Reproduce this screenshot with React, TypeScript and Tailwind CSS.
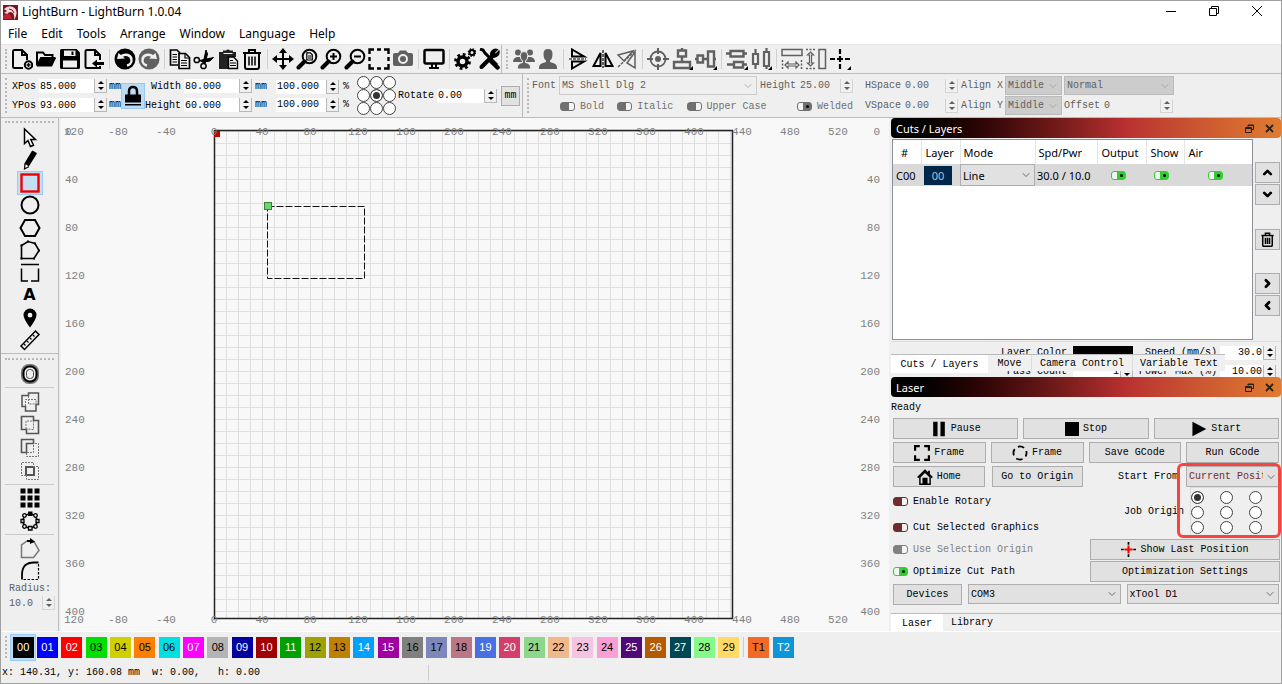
import type { ReactNode } from "react";
import { ChevronDown, ChevronLeft, ChevronRight, ChevronUp } from "lucide-react";

const menus = ["File", "Edit", "Tools", "Arrange", "Window", "Language", "Help"];

const swatches = [
  { id: "00", style: "bg-black text-white" },
  { id: "01", style: "bg-[#0000ff] text-white" },
  { id: "02", style: "bg-[#ff0000] text-white" },
  { id: "03", style: "bg-[#00e000] text-black" },
  { id: "04", style: "bg-[#d0d000] text-black" },
  { id: "05", style: "bg-[#ff8000] text-black" },
  { id: "06", style: "bg-[#00e0e0] text-black" },
  { id: "07", style: "bg-[#ff00ff] text-white" },
  { id: "08", style: "bg-[#b4b4b4] text-black" },
  { id: "09", style: "bg-[#0000a0] text-white" },
  { id: "10", style: "bg-[#a00000] text-white" },
  { id: "11", style: "bg-[#00a000] text-white" },
  { id: "12", style: "bg-[#a0a000] text-black" },
  { id: "13", style: "bg-[#c08000] text-black" },
  { id: "14", style: "bg-[#00a0ff] text-white" },
  { id: "15", style: "bg-[#a000a0] text-white" },
  { id: "16", style: "bg-[#808080] text-black" },
  { id: "17", style: "bg-[#7d87b9] text-black" },
  { id: "18", style: "bg-[#bb7784] text-black" },
  { id: "19", style: "bg-[#4a6fe3] text-white" },
  { id: "20", style: "bg-[#d33f6a] text-white" },
  { id: "21", style: "bg-[#8cd78c] text-black" },
  { id: "22", style: "bg-[#f0b98d] text-black" },
  { id: "23", style: "bg-[#f6c4e1] text-black" },
  { id: "24", style: "bg-[#fa9ed4] text-black" },
  { id: "25", style: "bg-[#500a78] text-white" },
  { id: "26", style: "bg-[#b45a00] text-white" },
  { id: "27", style: "bg-[#004754] text-white" },
  { id: "28", style: "bg-[#86fa88] text-black" },
  { id: "29", style: "bg-[#ffdb66] text-black" },
];

const toolSwatches = [
  { id: "T1", style: "bg-[#f36926] text-black" },
  { id: "T2", style: "bg-[#0c96d9] text-white" },
];

/* ---------- icons, all on a 22 x 22 grid ---------- */

function Glyph({ children, size = "size-[22px]" }: { children: ReactNode; size?: string }) {
  return (
    <svg viewBox="0 0 22 22" className={`${size} shrink-0`} fill="none" stroke="currentColor" strokeWidth="2" aria-hidden="true">
      {children}
    </svg>
  );
}

const NewIcon = (
  <Glyph>
    <path d="M12 20H3.500Q2 20 2 18.500V3.500Q2 2 3.500 2H11l5 5v5M11 2v5h5" />
    <circle cx="17.500" cy="17" r="3.700" />
    <path d="M17.500 15v4M15.500 17h4" strokeWidth="1.500" />
  </Glyph>
);
const OpenIcon = (
  <Glyph>
    <path d="M2 17V4.500H8l2 2.500h7.500v3" />
    <path d="M2 18.500 6 10h15l-4 8.500z" fill="currentColor" stroke="none" />
    <path d="M2 18 6 10h14.500" />
  </Glyph>
);
const SaveIcon = (
  <Glyph>
    <path d="M1 2.500Q1 1 2.500 1h15L21 4.500v15q0 1.500-1.500 1.500h-17Q1 21 1 19.500z" fill="currentColor" stroke="none" />
    <path d="M5 2.500h11.500V8H5z" fill="#efefef" stroke="none" />
    <path d="M4 12.500h14v7H4z" fill="#efefef" stroke="none" />
    <path d="M13.500 3.500v3.500" />
  </Glyph>
);
const ExportIcon = (
  <Glyph>
    <path d="M17 12V7l-5-5H4Q2.500 2 2.500 3.500v15Q2.500 20 4 20h13v-2M12 2v5h5" />
    <path d="M9 15.500 14 11.500V14h7v3h-7v2.500z" fill="currentColor" stroke="none" />
  </Glyph>
);
const UndoIcon = (
  <Glyph>
    <circle cx="11" cy="11" r="10.500" fill="currentColor" stroke="none" />
    <path d="M7 8.500C11 5 17 7 17.500 11.500 18 15 15 17 13 17.500" stroke="#efefef" strokeWidth="2.500" />
    <path d="M3 11 4.500 5l6.500 5.500z" fill="#efefef" stroke="none" />
  </Glyph>
);
const RedoIcon = (
  <Glyph>
    <circle cx="11" cy="11" r="10.500" fill="#606060" stroke="none" />
    <path d="M15 8.500C11 5 5 7 4.500 11.500 4 15 7 17 9 17.500" stroke="#efefef" strokeWidth="2.500" />
    <path d="M19 11 17.500 5 11 10.500z" fill="#efefef" stroke="none" />
  </Glyph>
);
const CopyIcon = (
  <Glyph>
    <path d="M9 17H1.500V2H8l3 3" strokeWidth="1.700" />
    <path d="M10 5.500h6.500l4 4V20.500H10z" strokeWidth="1.700" />
    <path d="M16 5.500v4.500h4.500M12 12.500h6M12 15h6M12 17.500h6M3.500 6.500H8M3.500 9H8M3.500 11.500H8M3.500 14H8" strokeWidth="1.200" />
  </Glyph>
);
const CutIcon = (
  <Glyph>
    <circle cx="3.800" cy="12" r="2.600" strokeWidth="1.500" />
    <circle cx="10.500" cy="18" r="2.600" strokeWidth="1.500" />
    <path d="m6.500 12.500 14-3-3.500 3.500-7 1.200zM10 15.500 13 2l1.500 4-2.500 9.500z" fill="currentColor" strokeWidth="1" />
  </Glyph>
);
const PasteIcon = (
  <Glyph>
    <path d="M2 4h4V2.500h3a2.500 2.500 0 0 1 4 0h3V4h3v5h-8v12H2z" fill="#222" stroke="none" />
    <path d="M6.500 5.500h9" stroke="#efefef" strokeWidth="1" />
    <path d="M11.500 9h5l4 4v7.500h-9z" fill="#efefef" strokeWidth="1.400" />
    <path d="M13 12.500h3M13 15h6M13 17.500h6" strokeWidth="1.200" />
  </Glyph>
);
const TrashIcon = (
  <Glyph>
    <path d="M2 5h18M8 4.500V2h6v2.500" />
    <path d="M4 5v14q0 2 2 2h10q2 0 2-2V5" />
    <path d="M8 8.500v9M11 8.500v9M14 8.500v9" strokeWidth="1.500" />
  </Glyph>
);
const MoveIcon = (
  <Glyph>
    <path d="M11 4v14M4 11h14" />
    <path d="m11 0 4 5H7zM11 22l4-5H7zM0 11l5-4v8zM22 11l-5-4v8z" fill="currentColor" stroke="none" />
  </Glyph>
);

function Magnifier({ children }: { children: ReactNode }) {
  return (
    <Glyph>
      <circle cx="13.500" cy="8.500" r="6.800" />
      <path d="m8.500 13.500-6 6" strokeWidth="4" strokeLinecap="round" />
      {children}
    </Glyph>
  );
}
const ZoomPageIcon = (
  <Magnifier>
    <path d="M10.800 4.800h3.500l2 2v5.200h-5.500z" strokeWidth="1.200" />
    <path d="M12 8h3.500M12 10h3.500" strokeWidth="1" />
  </Magnifier>
);
const ZoomInIcon = (
  <Magnifier>
    <path d="M13.500 5v7M10 8.500h7" />
  </Magnifier>
);
const ZoomOutIcon = (
  <Magnifier>
    <path d="M10 8.500h7" />
  </Magnifier>
);
const FrameIcon = (
  <Glyph>
    <path d="M1.500 6V1.500H6M9 1.500h4M16 1.500h4.500V6M20.500 9v4M20.500 16v4.500H16M13 20.500H9M6 20.500H1.500V16M1.500 13V9" strokeWidth="2.400" />
  </Glyph>
);
const CameraIcon = (
  <Glyph>
    <path d="M1 7q0-2 2-2h3l2-2.500h6L16 5h3q2 0 2 2v9q0 2-2 2H3q-2 0-2-2z" fill="#606060" stroke="none" />
    <circle cx="11" cy="11" r="4" stroke="#efefef" />
  </Glyph>
);
const MonitorIcon = (
  <Glyph>
    <rect x="1.500" y="2" width="19" height="13.500" rx="1.500" strokeWidth="2.500" />
    <path d="M9 16v3.500M13 16v3.500M6 20h10" />
  </Glyph>
);
const GearsIcon = (
  <Glyph>
    <circle cx="8.500" cy="13.500" r="4.500" strokeWidth="3.500" />
    <circle cx="8.500" cy="13.500" r="7" strokeWidth="2.800" strokeDasharray="2.750 2.750" />
    <circle cx="18" cy="4.500" r="2.500" />
    <circle cx="18" cy="4.500" r="3.800" strokeWidth="1.200" strokeDasharray="1.500 1.500" />
  </Glyph>
);
const ToolsIcon = (
  <Glyph>
    <path d="m2 1 3 1 2 3 12 12" strokeWidth="3" />
    <path d="m13 13 6.500 6.500" strokeWidth="4.500" strokeLinecap="round" />
    <path d="M3.500 19 15 7.500" strokeWidth="4" strokeLinecap="round" />
    <path d="M19.500 1.500 16 5l1.500 1.500L21 3a5 5 0 0 1-8 5 5 5 0 0 1 6.500-6.500z" fill="currentColor" strokeWidth="1.200" />
  </Glyph>
);
const GroupIcon = (
  <Glyph>
    <g fill="#606060" stroke="none">
      <circle cx="5" cy="4.500" r="3" />
      <circle cx="17" cy="4.500" r="3" />
      <path d="M0 14q0-4 4-5h3l3 5zM22 14q0-4-4-5h-3l-3 5z" />
    </g>
    <path d="M11 3.500q3.800 0 3.800 4T12.500 13v1.500q5 1 5 5v1.500h-13v-1.500q0-4 5-5V13Q7.200 11.500 7.200 7.500T11 3.500z" fill="#606060" stroke="#efefef" strokeWidth="1" />
  </Glyph>
);
const UserIcon = (
  <Glyph>
    <path d="M11 1q4.500 0 4.500 5T13 12.500V14q7 1.500 7 5v2H2v-2q0-3.500 7-5v-1.500Q6.500 11 6.500 6T11 1z" fill="#606060" stroke="none" />
  </Glyph>
);
const FlipVIcon = (
  <Glyph>
    <path d="M4 1.500v7h12zM4 20.500v-7h12z" />
    <path d="M1 11h17" strokeWidth="1.200" strokeDasharray="3 1" />
  </Glyph>
);
const FlipHIcon = (
  <Glyph>
    <path d="M8.500 5v13h-7zM13.500 5v13h7z" />
    <path d="M11 2v18" strokeWidth="1.200" strokeDasharray="3 1" />
  </Glyph>
);
const MirrorIcon = (
  <Glyph>
    <g stroke="#606060" strokeWidth="1.500">
      <path d="M2 7 17 3 8 13zM11 15l8-11v16z" />
      <path d="M2 19 20 2" strokeDasharray="3 1" />
    </g>
  </Glyph>
);
const TargetIcon = (
  <Glyph>
    <g stroke="#606060">
      <circle cx="11" cy="11" r="7.500" strokeWidth="1.800" />
      <circle cx="11" cy="11" r="3" fill="#606060" stroke="none" />
      <path d="M11 0v6M11 16v6M0 11h6M16 11h6" />
    </g>
  </Glyph>
);
const AlignCenterVIcon = (
  <Glyph>
    <g stroke="#606060" strokeWidth="2.400">
      <path d="M7 2.500h8v6H7zM3 14h16v6H3zM11 0v2M11 8v6" />
    </g>
    <path d="m22 18v4h-4z" fill="currentColor" stroke="none" />
  </Glyph>
);
const AlignCenterHIcon = (
  <Glyph>
    <g stroke="#606060" strokeWidth="2.400">
      <path d="M2.500 7.500h5.500v7H2.500zM13 3.500h6v15h-6zM0 11h2M8 11h5M19 11h2" />
    </g>
    <path d="m22 18v4h-4z" fill="currentColor" stroke="none" />
  </Glyph>
);
const DistributeVIcon = (
  <Glyph>
    <g stroke="#606060" strokeWidth="2.400">
      <path d="M4.500 3h13v5.500h-13zM8 14h9v5.500H8zM0 5.500h4M18 5.500h3M1 16.500h7M17 16.500h4" />
    </g>
    <path d="m22 18v4h-4z" fill="currentColor" stroke="none" />
  </Glyph>
);
const DistributeHIcon = (
  <Glyph>
    <g stroke="#606060" strokeWidth="2.200">
      <path d="M3 6h5v10H3zM14 4h5v14h-5zM5.500 1v5M5.500 16v5M16.500 0v4M16.500 18v3" />
    </g>
    <path d="m22 18v4h-4z" fill="currentColor" stroke="none" />
  </Glyph>
);
const DockHIcon = (
  <Glyph>
    <g stroke="#606060" strokeWidth="1.500">
      <path d="M1 1.500h20v6H1z" />
      <path d="M1.500 12v9M20.500 12v9" strokeDasharray="2 1.500" />
      <path d="m4 17 3-3v2h8v-2l3 3-3 3v-2H7v2z" strokeWidth="1.200" />
    </g>
  </Glyph>
);
const DockVIcon = (
  <Glyph>
    <g stroke="#606060" strokeWidth="1.500">
      <path d="M14 1.500h6.500v19H14z" />
      <path d="M1 1.500h9M1 20.500h9" strokeDasharray="2 1.500" />
      <path d="m5.500 4 3 3h-2v8h2l-3 3-3-3h2V7h-2z" strokeWidth="1.200" />
    </g>
  </Glyph>
);
const CrossIcon = (
  <Glyph>
    <path d="M11 1v5M11 8v6M11 16v5M1 11h5M8 11h6M16 11h5" strokeWidth="2.200" />
    <path d="m22 18v4h-4z" fill="currentColor" stroke="none" />
  </Glyph>
);

const PointerIcon = (
  <Glyph>
    <path d="M5.500 2v14.500l3.500-3 2.500 6 3-1.200-2.700-5.800H16.500z" fill="#fff" strokeWidth="1.500" />
  </Glyph>
);
const PencilIcon = (
  <Glyph>
    <path d="m13.500 2.500 3.500 2-7.500 12L6 15z" fill="currentColor" strokeWidth="1.500" strokeLinejoin="round" />
    <path d="m6 15-.5 5 4.500-2.500" fill="#fff" strokeWidth="1.200" />
  </Glyph>
);
const RectIcon = (
  <Glyph>
    <rect x="2.500" y="2.500" width="17" height="17" stroke="#f00000" strokeWidth="2.400" />
  </Glyph>
);
const EllipseIcon = (
  <Glyph>
    <circle cx="11" cy="11" r="8.500" />
  </Glyph>
);
const HexIcon = (
  <Glyph>
    <path d="M6 3h10l4.500 8L16 19H6L1.500 11z" />
  </Glyph>
);
const PolyIcon = (
  <Glyph>
    <path d="M2.500 19.500V6.500L9 2.500l7 2 4 7-5 8z" strokeWidth="1.600" />
    <path d="M1.500 5.500h2v2h-2zM8 1.500h2v2H8zM15 3.500h2v2h-2zM19 10.500h2v2h-2zM14 18.500h2v2h-2zM1.500 18.500h2v2h-2z" fill="currentColor" stroke="none" />
  </Glyph>
);
const NodeEditIcon = (
  <Glyph>
    <path d="M2 2.500h18M2.500 6.500V19H9M12 19h7.500V6.500" strokeWidth="1.500" />
  </Glyph>
);
const PinIcon = (
  <Glyph>
    <path d="M11 1.500a6.500 6.500 0 0 1 6.500 6.500q0 4-6.500 12.500Q4.500 12 4.500 8A6.500 6.500 0 0 1 11 1.500zm0 4.300a2.400 2.400 0 1 0 0 4.800 2.400 2.400 0 0 0 0-4.800z" fill="currentColor" stroke="none" />
  </Glyph>
);
const RulerIcon = (
  <Glyph>
    <path d="M2 17 16.500 2l3.500 3.500L5.500 20.500z" strokeWidth="1.500" />
    <path d="m5 15 1.500 1.500M8 12l1.500 1.500M11 9l1.500 1.500M14 6l1.500 1.500" strokeWidth="1.200" />
  </Glyph>
);
const OffsetIcon = (
  <Glyph>
    <rect x="3" y="2" width="16" height="18" rx="7" stroke="#777" strokeWidth="2" />
    <rect x="4.500" y="3.500" width="13" height="15" rx="6" strokeWidth="2" />
    <rect x="7.500" y="6.500" width="7" height="9" rx="3" stroke="#444" strokeWidth="1" />
  </Glyph>
);
const WeldIcon = (
  <Glyph>
    <path d="M3 4.500h6.500V2H19.500v11.500H17V20H6.500v-4.500H3z" stroke="#555" strokeWidth="1.500" />
    <path d="M6.500 15V8.500H17V13M9.500 5v8H19" stroke="#777" strokeWidth="1" strokeDasharray="2 1" />
  </Glyph>
);
const UnionIcon = (
  <Glyph>
    <path d="M2.500 2.500h12v4h5v13h-12v-4h-5z" stroke="#555" strokeWidth="1.600" />
    <path d="M7 15V7h7.500v8.500z" stroke="#777" strokeWidth="1" strokeDasharray="2 1" />
  </Glyph>
);
const SubtractIcon = (
  <Glyph>
    <path d="M2.500 2.500h12v4h-7v9h-5z" stroke="#555" strokeWidth="1.600" />
    <path d="M7.500 16v3.500h12v-13h-4M8 15.500h6.500V7" stroke="#777" strokeWidth="1" strokeDasharray="2 1" />
  </Glyph>
);
const IntersectIcon = (
  <Glyph>
    <path d="M7 7h8v8H7z" stroke="#555" strokeWidth="2" />
    <path d="M7 15.500H2.500v-13h12V7M7.500 15v4.500h12v-13H15" stroke="#777" strokeWidth="1" strokeDasharray="2 1" />
  </Glyph>
);
const GridIcon = (
  <Glyph>
    <path d="M1.500 1.500h5v5h-5zM8.500 1.500h5v5h-5zM15.500 1.500h5v5h-5zM1.500 8.500h5v5h-5zM8.500 8.500h5v5h-5zM15.500 8.500h5v5h-5zM1.500 15.500h5v5h-5zM8.500 15.500h5v5h-5zM15.500 15.500h5v5h-5z" fill="currentColor" stroke="none" />
  </Glyph>
);
const CircleArrayIcon = (
  <Glyph>
    <circle cx="11" cy="11" r="7" strokeWidth="1.500" />
    <g fill="#efefef" strokeWidth="1.300">
      <path d="M9.500 16.500h3.500v3.500H9.500zM2 9.500h3v3H2zM17 9.500h3v3h-3z" />
      <circle cx="5.500" cy="5.500" r="1.800" />
      <circle cx="16.500" cy="5.500" r="1.800" />
      <circle cx="5.500" cy="16.500" r="1.800" />
      <circle cx="16.500" cy="16.500" r="1.800" />
    </g>
    <path d="M9 1.500h4.500V6H9z" fill="currentColor" stroke="none" />
  </Glyph>
);
const StartPointIcon = (
  <Glyph>
    <path d="M2.500 19.500V7L8 3l7.500 1.500 4.500 8-5.500 7z" stroke="#777" strokeWidth="1.500" />
    <path d="M8 3h4" />
    <path d="m11 0 5 3.500-5 2.500z" fill="currentColor" stroke="none" />
  </Glyph>
);
const RadiusIcon = (
  <Glyph>
    <path d="M3 19.500V15Q3 2.500 15 2.500h4.500" strokeWidth="1.800" />
    <path d="M19.500 4v15.500H3" strokeWidth="1.200" strokeDasharray="2.500 1.500" />
  </Glyph>
);

const mainTools = [
  [["New", NewIcon], ["Open", OpenIcon], ["Save", SaveIcon], ["Export", ExportIcon]],
  [["Undo", UndoIcon], ["Redo", RedoIcon]],
  [["Copy", CopyIcon], ["Cut", CutIcon], ["Paste", PasteIcon], ["Delete", TrashIcon]],
  [
    ["Pan", MoveIcon],
    ["Zoom to page", ZoomPageIcon],
    ["Zoom in", ZoomInIcon],
    ["Zoom out", ZoomOutIcon],
    ["Frame selection", FrameIcon],
    ["Capture", CameraIcon],
  ],
  [["Preview", MonitorIcon]],
  [["Settings", GearsIcon], ["Device settings", ToolsIcon]],
] as [string, ReactNode][][];

const arrangeTools = [
  [["Group", GroupIcon], ["Ungroup", UserIcon]],
  [["Flip vertical", FlipVIcon], ["Flip horizontal", FlipHIcon], ["Mirror across line", MirrorIcon]],
  [["Center on page", TargetIcon], ["Align centers vertically", AlignCenterVIcon], ["Align centers horizontally", AlignCenterHIcon]],
  [["Distribute vertically", DistributeVIcon], ["Distribute horizontally", DistributeHIcon]],
  [["Dock horizontally", DockHIcon], ["Dock vertically", DockVIcon], ["Move to position", CrossIcon]],
] as [string, ReactNode][][];

const drawTools = [
  ["Select", PointerIcon],
  ["Draw lines", PencilIcon],
  ["Rectangle", RectIcon],
  ["Ellipse", EllipseIcon],
  ["Polygon", HexIcon],
  ["Closed path", PolyIcon],
  ["Edit nodes", NodeEditIcon],
  ["Text", <span className="font-['DejaVu_Sans'] text-base leading-none font-bold">A</span>],
  ["Position laser", PinIcon],
  ["Measure", RulerIcon],
] as [string, ReactNode][];

const booleanTools = [
  ["Weld", WeldIcon],
  ["Boolean union", UnionIcon],
  ["Boolean subtract", SubtractIcon],
  ["Boolean intersection", IntersectIcon],
] as [string, ReactNode][];

/* ---------- small controls ---------- */

function ToolGroups({ groups }: { groups: [string, ReactNode][][] }) {
  return (
    <div className="flex items-center">
      {groups.map((group, i) => (
        <div key={group[0][0]} className="flex items-center">
          {i > 0 && <span className="mx-[3px] h-5 w-px bg-[#d0d0d0]" />}
          {group.map(([label, icon]) => (
            <button key={label} type="button" aria-label={label} className="flex h-6 w-6 items-center justify-center">
              {icon}
            </button>
          ))}
        </div>
      ))}
    </div>
  );
}

function Handle() {
  return <span className="my-1 w-0 shrink-0 self-stretch border-l-2 border-dotted border-[#b8b8b8]" />;
}

function Spinner({ label, muted }: { label: string; muted?: boolean }) {
  return (
    <span
      className={`flex h-[14px] w-[13px] shrink-0 flex-col items-center justify-center gap-[3px] border-r border-b border-l bg-[#f0f0f0] ${
        muted ? "border-[#d4d4d4] text-[#606060]" : "border-[#b8b8b8] text-black"
      }`}
    >
      <button type="button" aria-label={`Increase ${label}`} className="block">
        <svg viewBox="0 0 6 3" className="block h-[3px] w-[6px]" fill="currentColor"><path d="M3 0 6 3H0z" /></svg>
      </button>
      <button type="button" aria-label={`Decrease ${label}`} className="block">
        <svg viewBox="0 0 6 3" className="block h-[3px] w-[6px]" fill="currentColor"><path d="M0 0h6L3 3z" /></svg>
      </button>
    </span>
  );
}

type FieldProps = { label: string; value: string; width: string; labelWidth?: string; hideLabel?: boolean; muted?: boolean };

function NumberField({ label, value, width, labelWidth = "", hideLabel, muted }: FieldProps) {
  return (
    <span className={`flex items-center ${muted ? "text-[#606060]" : ""}`}>
      <label className="flex items-center gap-[3px]">
        {!hideLabel && <span className={`text-right whitespace-nowrap ${labelWidth}`}>{label}</span>}
        <input
          aria-label={label}
          defaultValue={value}
          className={`h-[14px] px-px ${width} ${muted ? "bg-transparent" : "bg-white"}`}
        />
      </label>
      <Spinner label={label} muted={muted} />
    </span>
  );
}

type SelectProps = { label: string; value: string; className: string; arrow?: string };

function Select({ label, value, className, arrow = "text-[#444]" }: SelectProps) {
  return (
    <span className={`relative flex items-center border ${className}`}>
      <select aria-label={label} defaultValue={value} className="h-full w-full appearance-none overflow-hidden pr-4 pl-[2px]">
        <option>{value}</option>
      </select>
      <ChevronDown className={`pointer-events-none absolute right-[2px] size-3 ${arrow}`} strokeWidth={1.5} />
    </span>
  );
}

type ToggleProps = { label: string; on?: boolean; color: string; text?: string; hideLabel?: boolean };

function Toggle({ label, on, color, text = "", hideLabel }: ToggleProps) {
  return (
    <label className={`flex items-center gap-[5px] whitespace-nowrap ${color}`}>
      <input
        type="checkbox"
        aria-label={label}
        defaultChecked={on}
        className="relative h-[9px] w-[15px] shrink-0 appearance-none rounded-[3px] border border-current bg-[#f4f4f4] before:block before:h-full before:w-[8px] before:bg-current checked:before:ml-auto checked:after:absolute checked:after:top-[2px] checked:after:right-[2px] checked:after:size-[3px] checked:after:rounded-full checked:after:bg-black"
      />
      {!hideLabel && <span className={text}>{label}</span>}
    </label>
  );
}

function OriginGrid({ name, selected, className }: { name: string; selected: number; className: string }) {
  return (
    <div role="radiogroup" aria-label={name} className={`grid grid-cols-3 ${className}`}>
      {Array.from({ length: 9 }, (_, i) => (
        <input
          key={i}
          type="radio"
          name={name}
          aria-label={`${name} ${i + 1}`}
          defaultChecked={i === selected}
          className="size-[13px] appearance-none rounded-full border border-[#444] bg-white checked:bg-[#333] checked:shadow-[inset_0_0_0_2px_white]"
        />
      ))}
    </div>
  );
}

function PushButton({ children, className = "" }: { children: ReactNode; className?: string }) {
  return (
    <button
      type="button"
      className={`flex h-[21px] items-center justify-center gap-1 border border-[#adadad] bg-[#e1e1e1] whitespace-nowrap ${className}`}
    >
      {children}
    </button>
  );
}

function DockTitle({ children }: { children: ReactNode }) {
  return (
    <div className="flex h-[20px] items-center justify-between rounded bg-linear-to-r from-black via-[#b83030] via-60% to-[#e07b30] to-100% pr-[7px] pl-[5px] font-['Noto_Sans'] text-[11px] text-white">
      <h2>{children}</h2>
      <span className="flex items-center gap-[11px] text-[#222]">
        <button type="button" aria-label="Float panel">
          <svg viewBox="0 0 9 9" className="block size-[9px]" fill="none" stroke="currentColor">
            <path d="M3 3V1h5.500v4.500H6.500M3 1.500h5.500M.5 3.500h6v5h-6zM.5 4.500h6" />
          </svg>
        </button>
        <button type="button" aria-label="Close panel">
          <svg viewBox="0 0 9 9" className="block size-[9px]" fill="none" stroke="currentColor" strokeWidth="1.800">
            <path d="m1 1 7 7M8 1 1 8" />
          </svg>
        </button>
      </span>
    </div>
  );
}

/* ---------- regions ---------- */

function TitleBar() {
  return (
    <header className="bg-white font-['Noto_Sans'] text-xs">
      <div className="flex h-[22px] items-center justify-between pr-[19px] pl-[2px]">
        <div className="flex items-center gap-1">
          <svg viewBox="0 0 15 15" className="size-[15px]" aria-hidden="true">
            <path d="M0 0h15v15H0z" fill="#7a1420" />
            <path d="M1 4q4-4 9-2 4 2 3.500 7-1 4-2.500 6Q12 8 8 7q-3 0-3.500 2L1 8l3-2z" fill="#f3d9d9" />
            <path d="M3 9q5-1 6 5H0v-3z" fill="#c02030" />
            <path d="M6 4q4 0 5 4" stroke="#7a1420" fill="none" />
          </svg>
          <h1>LightBurn - LightBurn 1.0.04</h1>
        </div>
        <div className="flex items-center gap-[33px] pb-[3px]">
          <button type="button" aria-label="Minimize">
            <svg viewBox="0 0 10 10" className="block size-[10px]" stroke="#000" fill="none"><path d="M0 5.500h10" /></svg>
          </button>
          <button type="button" aria-label="Restore">
            <svg viewBox="0 0 10 10" className="block size-[10px]" stroke="#000" fill="none"><path d="M.5 2.500h7v7h-7zM2.500 2.500v-2h7v7h-2" /></svg>
          </button>
          <button type="button" aria-label="Close">
            <svg viewBox="0 0 10 10" className="block size-[10px]" stroke="#000" fill="none"><path d="m0 0 10 10M10 0 0 10" /></svg>
          </button>
        </div>
      </div>
      <nav className="flex h-[21px] items-center gap-[14px] pl-[7px]">
        {menus.map((menu) => (
          <button key={menu} type="button">{menu}</button>
        ))}
      </nav>
    </header>
  );
}

function PropertyBar() {
  return (
    <div className="flex h-11 border-b border-[#bbb]">
      <div className="flex shrink-0 items-center border-r border-[#bbb] pr-[2px] pl-1">
        <Handle />
        <div className="ml-[5px] flex flex-col gap-1">
          <NumberField label="XPos" value="85.000" width="w-[55px]" labelWidth="w-6" />
          <NumberField label="YPos" value="93.000" width="w-[55px]" labelWidth="w-6" />
        </div>
        <div className="ml-[2px] flex flex-col gap-1 leading-[14px]">
          <span>mm</span>
          <span>mm</span>
        </div>
        <button type="button" aria-label="Lock aspect ratio" className="flex h-[26px] w-6 items-center justify-center border border-[#99c9ef] bg-[#bcdcf4]">
          <svg viewBox="0 0 18 22" className="h-[22px] w-[18px]" fill="none">
            <path d="M5 11V6.500Q5 2 9 2t4 4.500V11" stroke="#000" strokeWidth="2.500" />
            <path d="M1 9.500h16v8H1zM1 19h16v1.500H1z" fill="#000" />
          </svg>
        </button>
        <div className="flex flex-col gap-1">
          <NumberField label="Width" value="80.000" width="w-[55px]" labelWidth="w-9" />
          <NumberField label="Height" value="60.000" width="w-[55px]" labelWidth="w-9" />
        </div>
        <div className="ml-[3px] flex flex-col gap-1 leading-[14px]">
          <span>mm</span>
          <span>mm</span>
        </div>
        <div className="ml-[9px] flex flex-col gap-1">
          <NumberField label="Width percent" value="100.000" width="w-[50px]" hideLabel />
          <NumberField label="Height percent" value="100.000" width="w-[50px]" hideLabel />
        </div>
        <div className="ml-1 flex flex-col gap-1 leading-[14px]">
          <span>%</span>
          <span>%</span>
        </div>
        <OriginGrid name="Anchor" selected={4} className="ml-2" />
        <div className="ml-[2px]">
          <NumberField label="Rotate" value="0.00" width="w-[47px]" labelWidth="w-9" />
        </div>
        <button type="button" className="ml-1 h-5 w-[19px] border border-[#adadad] bg-[#e1e1e1]">mm</button>
      </div>

      <div className="flex items-center pl-1 text-[#606060]">
        <Handle />
        <div className="ml-[3px] flex flex-col gap-[3px]">
          <div className="flex items-center gap-[3px]">
            <span className="w-6">Font</span>
            <Select label="Font" value="MS Shell Dlg 2" className="h-[19px] w-[198px] border-[#ccc]" arrow="text-[#999]" />
            <NumberField label="Height" value="25.00" width="w-[41px]" labelWidth="w-9" muted />
          </div>
          <div className="flex h-[17px] items-center justify-between pl-[28px]">
            <Toggle label="Bold" color="text-[#707070]" />
            <Toggle label="Italic" color="text-[#707070]" />
            <Toggle label="Upper Case" color="text-[#707070]" />
            <span className="w-1" />
            <Toggle label="Welded" color="text-[#707070]" on />
          </div>
        </div>
        <div className="ml-3 grid grid-cols-[94px_42px_57px] gap-x-[2px] gap-y-px">
          <NumberField label="HSpace" value="0.00" width="w-[41px]" labelWidth="w-9" muted />
          <span className="self-center">Align X</span>
          <Select label="Align X" value="Middle" className="h-[19px] border-[#bbb] bg-[#ccc]" arrow="text-[#999]" />
          <NumberField label="VSpace" value="0.00" width="w-[41px]" labelWidth="w-9" muted />
          <span className="self-center">Align Y</span>
          <Select label="Align Y" value="Middle" className="h-[19px] border-[#bbb] bg-[#ccc]" arrow="text-[#999]" />
        </div>
        <div className="ml-[2px] flex flex-col gap-px">
          <Select label="Text mode" value="Normal" className="h-[19px] w-[110px] border-[#bbb] bg-[#ccc]" arrow="text-[#999]" />
          <span className="flex h-[19px] items-center">
            <NumberField label="Offset" value="0" width="w-[57px]" labelWidth="w-9" muted />
          </span>
        </div>
      </div>
    </div>
  );
}

function ToolRail() {
  return (
    <aside className="flex w-[58px] shrink-0 flex-col border-r border-[#bbb]">
      <div className="border-b border-[#bbb] px-1 pt-[3px] pb-[2px]">
        <div className="mb-1 border-t-2 border-dotted border-[#b8b8b8]" />
        <div className="flex h-[224px] flex-col items-center justify-between">
          {drawTools.map(([label, icon]) => (
            <button
              key={label}
              type="button"
              aria-label={label}
              className={`flex h-[22px] w-6 items-center justify-center ${label === "Rectangle" ? "bg-[#c4def4] outline outline-[#99ccf5]" : ""}`}
            >
              {icon}
            </button>
          ))}
        </div>
      </div>
      <div className="flex flex-1 flex-col items-center px-1 pt-1">
        <div className="mb-[3px] w-full border-t-2 border-dotted border-[#b8b8b8]" />
        <button type="button" aria-label="Offset shapes">{OffsetIcon}</button>
        <span className="my-[2px] h-px w-full bg-[#ccc]" />
        {booleanTools.map(([label, icon]) => (
          <button key={label} type="button" aria-label={label} className="flex h-[23px] items-center">{icon}</button>
        ))}
        <span className="my-[2px] h-px w-full bg-[#ccc]" />
        <button type="button" aria-label="Grid array" className="mb-px">{GridIcon}</button>
        <button type="button" aria-label="Circular array">{CircleArrayIcon}</button>
        <span className="my-[2px] h-px w-full bg-[#ccc]" />
        <button type="button" aria-label="Set start point" className="mt-px">{StartPointIcon}</button>
        <button type="button" aria-label="Round corners">{RadiusIcon}</button>
        <label htmlFor="radius" className="w-full pl-1 leading-[14px] text-[#606060]">Radius:</label>
        <span className="flex w-full items-center pl-1 text-[#606060]">
          <input id="radius" defaultValue="10.0" className="h-[14px] w-[33px]" />
          <Spinner label="radius" muted />
        </span>
      </div>
    </aside>
  );
}

// 48px on screen is 40mm on the bed, origin at the top left corner of the bed
const STEP = 48;
const ORIGIN_X = 153;
const ORIGIN_Y = 13;

function Workspace() {
  const columns = Array.from({ length: 16 }, (_, i) => i - 2);
  const rows = Array.from({ length: 11 }, (_, i) => i);
  return (
    <main className="ml-[2px] flex min-w-0 flex-1 bg-[#f8f8f8]">
      <svg width="100%" height="100%" className="min-h-[510px]" role="img" aria-label="Laser bed">
        <defs>
          <pattern id="bed" x={ORIGIN_X} y={ORIGIN_Y} width="12" height="12" patternUnits="userSpaceOnUse">
            <path d="M.5 0v12M0 .5h12" stroke="#dedede" />
          </pattern>
        </defs>
        <rect x={ORIGIN_X} y={ORIGIN_Y} width="518" height="488" fill="url(#bed)" />
        <rect x={ORIGIN_X + 0.5} y={ORIGIN_Y - 0.5} width="518" height="488" fill="none" stroke="#222" strokeWidth="1.500" />
        <rect x={ORIGIN_X} y={ORIGIN_Y} width="6" height="6" fill="#c80000" />
        <g fill="#808080" fontSize="11" fontFamily="Liberation Mono, monospace">
          {columns.map((n) => (
            <g key={n} textAnchor="middle">
              <text x={ORIGIN_X + n * STEP} y={ORIGIN_Y + 4}>{n * 40}</text>
              <text x={ORIGIN_X + n * STEP} y={ORIGIN_Y + 492}>{n * 40}</text>
            </g>
          ))}
          <text x="3" y={ORIGIN_Y + 4}>120</text>
          <text x="3" y={ORIGIN_Y + 492}>120</text>
          {rows.map((n) => (
            <g key={n}>
              <text x="4" y={ORIGIN_Y + 4 + n * STEP}>{n * 40}</text>
              <text x="100%" dx="-9" y={ORIGIN_Y + 4 + n * STEP} textAnchor="end">{n * 40}</text>
            </g>
          ))}
        </g>
        <path d="M206.500 88.500H303.500V160.500H206.500z" fill="none" stroke="#111" strokeDasharray="7 2" />
        <rect x="203.500" y="84.500" width="7" height="7" fill="#6cd96c" stroke="#3c7c3c" />
      </svg>
    </main>
  );
}

function CutsPanel() {
  return (
    <section>
      <DockTitle>Cuts / Layers</DockTitle>
      <div className="flex pt-px pl-px">
        <div className="h-[201px] flex-1 border border-[#8a8f98] bg-white font-['Noto_Sans'] text-[11px]">
          <table className="w-full table-fixed border-collapse text-left">
            <thead>
              <tr className="h-6">
                <th className="w-[28px] border-r border-[#e5e5e5] pl-2 font-normal">#</th>
                <th className="w-[39px] border-r border-[#e5e5e5] pl-1 font-normal">Layer</th>
                <th className="w-[75px] border-r border-[#e5e5e5] pl-[3px] font-normal">Mode</th>
                <th className="w-[62px] border-r border-[#e5e5e5] pl-[3px] font-normal">Spd/Pwr</th>
                <th className="w-[49px] border-r border-[#e5e5e5] pl-1 font-normal">Output</th>
                <th className="w-[38px] border-r border-[#e5e5e5] pl-1 font-normal">Show</th>
                <th className="pl-1 font-normal">Air</th>
              </tr>
            </thead>
            <tbody>
              <tr className="h-[22px] bg-[#d9d9d9]">
                <td className="pl-[3px]">C00</td>
                <td className="pl-[3px]">
                  <span className="flex h-[19px] w-7 items-center justify-center bg-[#00264a] text-[#a8c4dc]">00</span>
                </td>
                <td>
                  <Select label="Mode" value="Line" className="h-[22px] border-[#adadad] bg-[#e1e1e1]" />
                </td>
                <td className="pl-[2px] whitespace-nowrap">30.0 / 10.0</td>
                <td className="pl-[14px]"><Toggle label="Output" color="text-[#2fcf2f]" on hideLabel /></td>
                <td className="pl-2"><Toggle label="Show" color="text-[#2fcf2f]" on hideLabel /></td>
                <td className="pl-6"><Toggle label="Air" color="text-[#2fcf2f]" on hideLabel /></td>
              </tr>
            </tbody>
          </table>
        </div>
        <div className="flex w-[28px] flex-col items-end pt-[23px] pr-px">
          <PushButton className="w-[25px]"><ChevronUp className="size-[13px]" strokeWidth={5} aria-label="Move up" /></PushButton>
          <PushButton className="mt-px w-[25px]"><ChevronDown className="size-[13px]" strokeWidth={5} aria-label="Move down" /></PushButton>
          <PushButton className="mt-6 w-[25px]">
            <Glyph size="size-[15px]">
              <path d="M2 5h18M8 4.500V2h6v2.500M4 5v14q0 2 2 2h10q2 0 2-2V5M8 8.500v9M11 8.500v9M14 8.500v9" strokeWidth="2.200" />
            </Glyph>
          </PushButton>
          <PushButton className="mt-[23px] w-[25px]"><ChevronRight className="size-[13px]" strokeWidth={5} aria-label="Expand" /></PushButton>
          <PushButton className="mt-px w-[25px]"><ChevronLeft className="size-[13px]" strokeWidth={5} aria-label="Collapse" /></PushButton>
        </div>
      </div>

      <div className="relative mt-px h-[36px] overflow-hidden border-t border-[#ddd]">
        <div className="grid grid-cols-[176px_60px_1fr] items-center gap-x-[6px] gap-y-1 pt-[3px]">
          <span className="text-right">Layer Color</span>
          <span className="h-[14px] bg-black" />
          <span className="flex justify-end pr-2">
            <NumberField label="Speed (mm/s)" value="30.0" width="w-[43px] text-right" />
          </span>
          <span className="text-right">Pass Count</span>
          <NumberField label="Passes" value="1" width="w-[47px] text-right" hideLabel />
          <span className="flex justify-end pr-2">
            <NumberField label="Power Max (%)" value="10.00" width="w-[43px] text-right" />
          </span>
        </div>
        <div role="tablist" className="absolute top-[12px] left-0 flex h-[18px] items-start border-t border-[#bbb] whitespace-nowrap">
          <button type="button" role="tab" aria-selected="true" className="h-[18px] w-[97px] bg-white">Cuts / Layers</button>
          <button type="button" role="tab" aria-selected="false" className="h-[16px] w-11 border-r border-[#ddd] bg-[#f0f0f0]">Move</button>
          <button type="button" role="tab" aria-selected="false" className="h-[16px] w-[101px] border-r border-[#ddd] bg-[#f0f0f0]">Camera Control</button>
          <button type="button" role="tab" aria-selected="false" className="h-[16px] w-[92px] bg-[#f0f0f0]">Variable Text</button>
        </div>
      </div>
    </section>
  );
}

function LaserPanel() {
  return (
    <section className="flex flex-1 flex-col">
      <DockTitle>Laser</DockTitle>
      <p className="h-[21px] leading-[21px]">Ready</p>
      <div className="grid grid-cols-3 gap-x-[5px] px-[2px]">
        <PushButton>
          <Glyph size="size-4"><path d="M3 1h6v20H3zM13 1h6v20h-6z" fill="currentColor" stroke="none" /></Glyph>
          Pause
        </PushButton>
        <PushButton><span className="size-[14px] bg-black" />Stop</PushButton>
        <PushButton>
          <Glyph size="size-4"><path d="M2 1v20l19-10z" fill="currentColor" stroke="none" /></Glyph>
          Start
        </PushButton>
      </div>
      <div className="mt-[3px] grid grid-cols-4 gap-x-[5px] px-[2px]">
        <PushButton>
          <Glyph size="size-4"><path d="M1.500 8V1.500H8M14 1.500h6.500V8M20.500 14v6.500H14M8 20.500H1.500V14" strokeWidth="3" /></Glyph>
          Frame
        </PushButton>
        <PushButton>
          <Glyph size="size-4"><circle cx="11" cy="11" r="9" strokeWidth="2.500" strokeDasharray="9 5.100" strokeDashoffset="4" /></Glyph>
          Frame
        </PushButton>
        <PushButton>Save GCode</PushButton>
        <PushButton>Run GCode</PushButton>
      </div>

      <div className="relative mt-[3px] grid grid-cols-[190px_1fr] gap-x-[7px] pr-px pl-[2px]">
        <div>
          <div className="grid grid-cols-2 gap-x-[7px]">
            <PushButton>
              <Glyph size="size-4">
                <path d="M1 12 11 2l10 10M16.500 2.500V7" strokeWidth="2.500" />
                <path d="M4 11v10h14V11l-7-7z" />
                <path d="M8.500 21v-8h5v8z" fill="currentColor" />
              </Glyph>
              Home
            </PushButton>
            <PushButton>Go to Origin</PushButton>
          </div>
          <div className="mt-[7px] flex flex-col">
            <Toggle label="Enable Rotary" color="text-[#702c2c]" text="text-black" />
            <span className="h-[11px]" />
            <Toggle label="Cut Selected Graphics" color="text-[#702c2c]" text="text-black" />
            <span className="h-[7px]" />
            <Toggle label="Use Selection Origin" color="text-[#808080]" />
            <span className="h-[7px]" />
            <Toggle label="Optimize Cut Path" color="text-[#2fcf2f]" text="text-black" on />
          </div>
        </div>
        <div className="flex flex-col">
          <div className="flex items-center justify-end gap-2">
            <span>Start From</span>
            <Select label="Start From" value="Current Position" className="h-[21px] w-[94px] border-[#adadad] bg-[#e1e1e1] text-[#702c2c]" />
          </div>
          <div className="flex items-center justify-end gap-[6px] pr-[2px]">
            <span>Job Origin</span>
            <OriginGrid name="Job Origin" selected={0} className="h-[49px] w-[88px] auto-rows-[15px] content-start border-t border-l border-[#ddd] pt-[3px]" />
          </div>
          <PushButton className="mt-[3px]">
            <Glyph size="size-[15px]">
              <path d="M11 0v4M11 18v4M0 11h4M18 11h4" strokeWidth="2.500" />
              <path d="M11 5v12M5 11h12" stroke="#f00" strokeWidth="3" />
            </Glyph>
            Show Last Position
          </PushButton>
          <PushButton className="mt-px">Optimization Settings</PushButton>
        </div>
        <div className="pointer-events-none absolute -top-[3px] right-0 h-[75px] w-[104px] rounded-[6px] border-[3px] border-[#f9433f]" />
      </div>

      <div className="mt-[2px] flex gap-[6px] pr-[2px] pl-[2px]">
        <PushButton className="h-[20px] w-[69px]">Devices</PushButton>
        <Select label="Port" value="COM3" className="h-[20px] flex-1 border-[#adadad] bg-[#e1e1e1]" />
        <Select label="Device" value="xTool D1" className="h-[20px] flex-1 border-[#adadad] bg-[#e1e1e1]" />
      </div>
      <div role="tablist" className="mt-auto flex h-[18px] items-start border-t border-[#bbb]">
        <button type="button" role="tab" aria-selected="true" className="h-[18px] w-[52px] bg-white">Laser</button>
        <button type="button" role="tab" aria-selected="false" className="h-[16px] w-[58px] bg-[#f0f0f0]">Library</button>
      </div>
    </section>
  );
}

function Palette() {
  return (
    <div className="flex h-[31px] items-center border-t border-white pl-1">
      <Handle />
      <div className="ml-1 flex w-[730px] shrink-0">
        {swatches.map((swatch) => (
          <button
            key={swatch.id}
            type="button"
            className={`flex h-[25px] flex-1 items-center justify-center ${swatch.id === "00" ? "bg-[#bcdcf4] outline outline-[#99ccf5]" : ""}`}
          >
            <span className={`flex size-[21px] items-center justify-center font-['Liberation_Sans'] text-[11px] ${swatch.style}`}>{swatch.id}</span>
          </button>
        ))}
      </div>
      <span className="mx-[2px] h-5 w-px bg-[#ccc]" />
      {toolSwatches.map((swatch) => (
        <button key={swatch.id} type="button" className="flex h-[25px] w-[25px] items-center justify-center">
          <span className={`flex size-[21px] items-center justify-center font-['Liberation_Sans'] text-[11px] ${swatch.style}`}>{swatch.id}</span>
        </button>
      ))}
    </div>
  );
}

export default function App() {
  return (
    <div className="flex min-h-screen flex-col border border-[#a0a0a0] bg-[#efefef] font-['Liberation_Mono',monospace] text-[10px] leading-[15px] text-black">
      <TitleBar />
      <div className="flex h-[30px] border-t border-b border-t-[#e5e5e5] border-b-[#bbb]">
        <div className="flex items-center border-r border-[#bbb] pl-1">
          <Handle />
          <span className="w-[3px]" />
          <ToolGroups groups={mainTools} />
        </div>
        <div className="flex items-center pl-1">
          <Handle />
          <span className="w-1" />
          <ToolGroups groups={arrangeTools} />
        </div>
      </div>
      <PropertyBar />
      <div className="flex flex-1">
        <ToolRail />
        <Workspace />
        <div className="ml-[2px] flex w-[390px] shrink-0 flex-col">
          <CutsPanel />
          <LaserPanel />
        </div>
      </div>
      <Palette />
      <footer className="flex h-[21px] items-center">
        <span className="w-[427px] pl-px whitespace-pre">x: 140.31, y: 160.08 mm  w: 0.00,   h: 0.00</span>
        <span className="h-4 w-px bg-[#ccc]" />
      </footer>
    </div>
  );
}
